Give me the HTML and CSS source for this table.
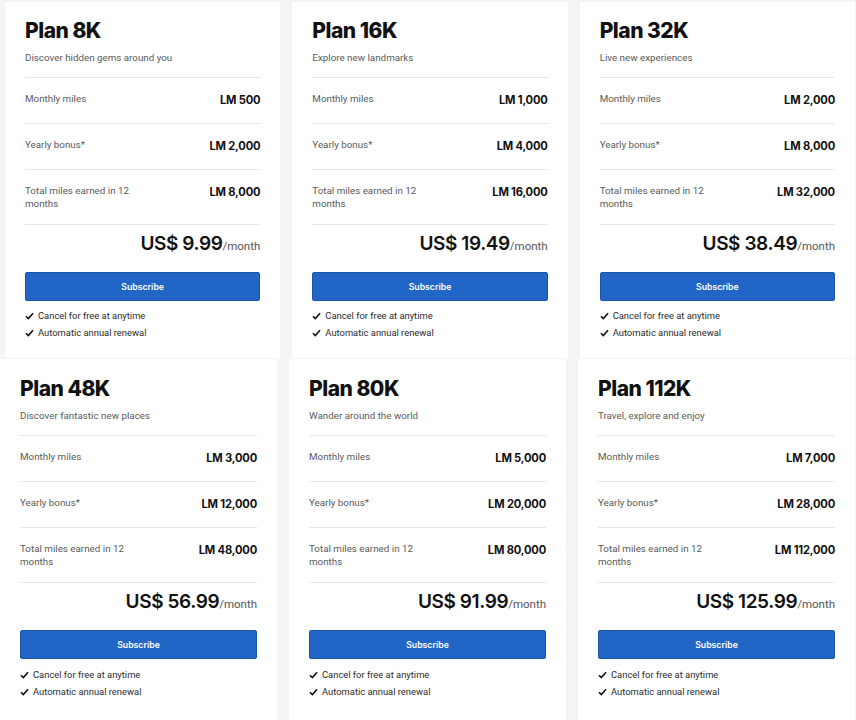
FILE: index.html
```html
<!DOCTYPE html>
<html lang="en">
<head>
<meta charset="utf-8">
<title>Plans</title>
<link rel="stylesheet" href="styles.css">
</head>
<body>
<div class="row row-top">
  <div class="card">
    <div class="head"><h2 class="title">Plan 8K</h2><p class="sub">Discover hidden gems around you</p></div>
    <div class="line"><span class="lbl">Monthly miles</span><span class="val">LM 500</span></div>
    <div class="line"><span class="lbl">Yearly bonus*</span><span class="val">LM 2,000</span></div>
    <div class="line"><span class="lbl">Total miles earned in 12 months</span><span class="val">LM 8,000</span></div>
    <div class="price"><span class="amt">US$ 9.99</span><span class="per">/month</span></div>
    <button class="btn">Subscribe</button>
    <ul class="checks">
      <li><svg class="ck" viewBox="0 0 10 9"><path d="M1 4.8 L3.7 7.4 L9 1.4"/></svg>Cancel for free at anytime</li>
      <li><svg class="ck" viewBox="0 0 10 9"><path d="M1 4.8 L3.7 7.4 L9 1.4"/></svg>Automatic annual renewal</li>
    </ul>
  </div>
  <div class="card">
    <div class="head"><h2 class="title">Plan 16K</h2><p class="sub">Explore new landmarks</p></div>
    <div class="line"><span class="lbl">Monthly miles</span><span class="val">LM 1,000</span></div>
    <div class="line"><span class="lbl">Yearly bonus*</span><span class="val">LM 4,000</span></div>
    <div class="line"><span class="lbl">Total miles earned in 12 months</span><span class="val">LM 16,000</span></div>
    <div class="price"><span class="amt">US$ 19.49</span><span class="per">/month</span></div>
    <button class="btn">Subscribe</button>
    <ul class="checks">
      <li><svg class="ck" viewBox="0 0 10 9"><path d="M1 4.8 L3.7 7.4 L9 1.4"/></svg>Cancel for free at anytime</li>
      <li><svg class="ck" viewBox="0 0 10 9"><path d="M1 4.8 L3.7 7.4 L9 1.4"/></svg>Automatic annual renewal</li>
    </ul>
  </div>
  <div class="card">
    <div class="head"><h2 class="title">Plan 32K</h2><p class="sub">Live new experiences</p></div>
    <div class="line"><span class="lbl">Monthly miles</span><span class="val">LM 2,000</span></div>
    <div class="line"><span class="lbl">Yearly bonus*</span><span class="val">LM 8,000</span></div>
    <div class="line"><span class="lbl">Total miles earned in 12 months</span><span class="val">LM 32,000</span></div>
    <div class="price"><span class="amt">US$ 38.49</span><span class="per">/month</span></div>
    <button class="btn">Subscribe</button>
    <ul class="checks">
      <li><svg class="ck" viewBox="0 0 10 9"><path d="M1 4.8 L3.7 7.4 L9 1.4"/></svg>Cancel for free at anytime</li>
      <li><svg class="ck" viewBox="0 0 10 9"><path d="M1 4.8 L3.7 7.4 L9 1.4"/></svg>Automatic annual renewal</li>
    </ul>
  </div>
</div>
<div class="row row-bottom">
  <div class="card">
    <div class="head"><h2 class="title">Plan 48K</h2><p class="sub">Discover fantastic new places</p></div>
    <div class="line"><span class="lbl">Monthly miles</span><span class="val">LM 3,000</span></div>
    <div class="line"><span class="lbl">Yearly bonus*</span><span class="val">LM 12,000</span></div>
    <div class="line"><span class="lbl">Total miles earned in 12 months</span><span class="val">LM 48,000</span></div>
    <div class="price"><span class="amt">US$ 56.99</span><span class="per">/month</span></div>
    <button class="btn">Subscribe</button>
    <ul class="checks">
      <li><svg class="ck" viewBox="0 0 10 9"><path d="M1 4.8 L3.7 7.4 L9 1.4"/></svg>Cancel for free at anytime</li>
      <li><svg class="ck" viewBox="0 0 10 9"><path d="M1 4.8 L3.7 7.4 L9 1.4"/></svg>Automatic annual renewal</li>
    </ul>
  </div>
  <div class="card">
    <div class="head"><h2 class="title">Plan 80K</h2><p class="sub">Wander around the world</p></div>
    <div class="line"><span class="lbl">Monthly miles</span><span class="val">LM 5,000</span></div>
    <div class="line"><span class="lbl">Yearly bonus*</span><span class="val">LM 20,000</span></div>
    <div class="line"><span class="lbl">Total miles earned in 12 months</span><span class="val">LM 80,000</span></div>
    <div class="price"><span class="amt">US$ 91.99</span><span class="per">/month</span></div>
    <button class="btn">Subscribe</button>
    <ul class="checks">
      <li><svg class="ck" viewBox="0 0 10 9"><path d="M1 4.8 L3.7 7.4 L9 1.4"/></svg>Cancel for free at anytime</li>
      <li><svg class="ck" viewBox="0 0 10 9"><path d="M1 4.8 L3.7 7.4 L9 1.4"/></svg>Automatic annual renewal</li>
    </ul>
  </div>
  <div class="card">
    <div class="head"><h2 class="title">Plan 112K</h2><p class="sub">Travel, explore and enjoy</p></div>
    <div class="line"><span class="lbl">Monthly miles</span><span class="val">LM 7,000</span></div>
    <div class="line"><span class="lbl">Yearly bonus*</span><span class="val">LM 28,000</span></div>
    <div class="line"><span class="lbl">Total miles earned in 12 months</span><span class="val">LM 112,000</span></div>
    <div class="price"><span class="amt">US$ 125.99</span><span class="per">/month</span></div>
    <button class="btn">Subscribe</button>
    <ul class="checks">
      <li><svg class="ck" viewBox="0 0 10 9"><path d="M1 4.8 L3.7 7.4 L9 1.4"/></svg>Cancel for free at anytime</li>
      <li><svg class="ck" viewBox="0 0 10 9"><path d="M1 4.8 L3.7 7.4 L9 1.4"/></svg>Automatic annual renewal</li>
    </ul>
  </div>
</div>
</body>
</html>
```
FILE: styles.css
```css
* { box-sizing: border-box; }
html, body { margin: 0; padding: 0; }
body {
  background: #f3f4f6;
  width: 856px;
  height: 720px;
  overflow: hidden;
  font-family: Roboto, "Liberation Sans", Arial, sans-serif;
  color: #222;
}
.row {
  display: flex;
  gap: 12px;
}
.row-top { padding: 2px 1px 0 5px; }
.row-bottom { padding: 1px 1px 0 0; }
.card {
  flex: 1 1 0;
  min-width: 0;
  background: #fff;
  padding: 16px 20px 17px 20px;
  display: flex;
  flex-direction: column;
}
.row-bottom .card { padding-top: 17px; padding-bottom: 20px; }
.head {
  border-bottom: 1px solid #e6e7e9;
  padding-bottom: 13px;
}
.title {
  margin: 0;
  font-family: Inter, "Liberation Sans", sans-serif;
  font-weight: 800;
  font-size: 21px;
  line-height: 26px;
  letter-spacing: -0.5px;
  color: #111;
}
.sub {
  margin: 7px 0 0;
  font-size: 9.8px;
  line-height: 13px;
  color: #5a5a5a;
}
.line {
  display: flex;
  justify-content: space-between;
  align-items: flex-start;
  padding: 14px 0 14px;
  border-bottom: 1px solid #e6e7e9;
}
.lbl {
  max-width: 50%;
  font-size: 9.8px;
  line-height: 13px;
  color: #5a5a5a;
}
.val {
  font-family: Inter, "Liberation Sans", sans-serif;
  font-weight: 700;
  font-size: 11.2px;
  line-height: 17px;
  letter-spacing: -0.2px;
  color: #111;
}
.price {
  text-align: right;
  padding-top: 7px;
  line-height: 24px;
  white-space: nowrap;
}
.amt {
  font-family: Inter, "Liberation Sans", sans-serif;
  font-weight: 600;
  font-size: 19px;
  letter-spacing: -0.4px;
  color: #111;
}
.per {
  font-family: Roboto, "Liberation Sans", sans-serif;
  font-size: 11.5px;
  color: #555;
}
.btn {
  margin-top: 14px;
  height: 29px;
  width: 100%;
  background: #2166c7;
  border: 1px solid #1b55a8;
  border-radius: 2px;
  color: #fff;
  font-family: Inter, "Liberation Sans", sans-serif;
  font-weight: 600;
  font-size: 8.7px;
  padding: 0;
}
.checks {
  list-style: none;
  margin: 6px 0 0;
  padding: 0;
}
.row-bottom .checks { margin-top: 7px; }
.checks li {
  display: flex;
  align-items: center;
  font-size: 9.4px;
  line-height: 17px;
  color: #2a2a2a;
}
.ck {
  width: 9px;
  height: 8px;
  margin-right: 4px;
  fill: none;
  stroke: #111;
  stroke-width: 1.8;
}
```
